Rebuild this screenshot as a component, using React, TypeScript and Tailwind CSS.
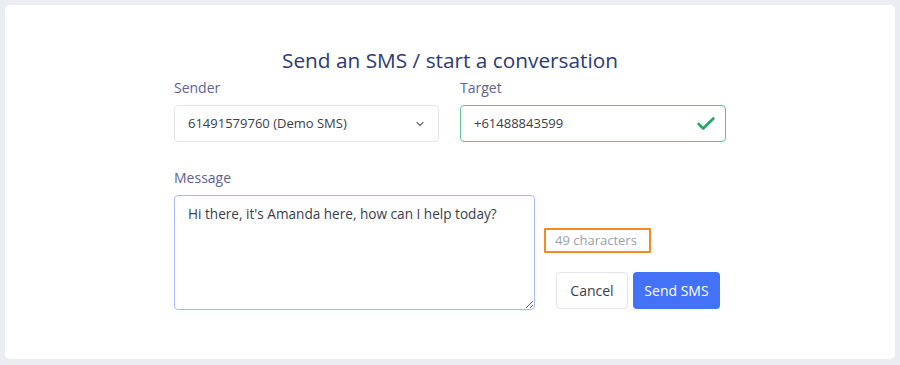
import { ChevronDown, Check } from 'lucide-react'

const font = { fontFamily: '"Open Sans", "Noto Sans", sans-serif' }

export default function App() {
  return (
    <div className="h-[365px] w-[900px] bg-[#ecedf3] p-[5px] pb-[6px]" style={font}>
      <div className="flex h-full flex-col items-center rounded-[5px] bg-white pt-[41px]">
        <h1 className="text-[20.8px] leading-[28px] text-[#2c3a72]">Send an SMS / start a conversation</h1>

        <div className="mt-[4px] grid w-[552px] grid-cols-[265px_266px] gap-x-[21px]">
          <div className="flex flex-col">
            <label className="text-[14px] leading-[20px] text-[#5d6393]">Sender</label>
            <div className="mt-[7px] flex h-[37px] items-center justify-between rounded-[4px] border border-[#e3e5ee] pl-[13px] pr-[12px] text-[13px] text-[#3a3d4a]">
              <span>61491579760 (Demo SMS)</span>
              <ChevronDown size={12} strokeWidth={2.5} className="text-[#6b6f80]" />
            </div>
          </div>
          <div className="flex flex-col">
            <label className="text-[14px] leading-[20px] text-[#5d6393]">Target</label>
            <div className="mt-[7px] flex h-[37px] items-center justify-between rounded-[4px] border border-[#5cc493] pl-[13px] pr-[8px] text-[13px] text-[#3a3d4a]">
              <span>+61488843599</span>
              <Check size={22} strokeWidth={3} className="text-[#23a86a]" />
            </div>
          </div>
        </div>

        <div className="mt-[26px] flex w-[552px] flex-col">
          <label className="text-[14px] leading-[20px] text-[#5d6393]">Message</label>
          <div className="mt-[7px] flex">
            <textarea
              className="h-[115px] w-[361px] resize rounded-[4px] border border-[#a9b8fb] px-[13px] py-[8px] text-[13.6px] leading-[20px] text-[#3a3d4a] outline-none"
              style={font}
              defaultValue="Hi there, it's Amanda here, how can I help today?"
            />
            <div className="ml-[9px] flex flex-col items-start">
              <div className="mt-[33px] flex h-[25px] w-[107px] items-center rounded-[1px] border-2 border-[#f58a1f] pl-[9px] text-[13px] text-[#9a9eab]">
                49 characters
              </div>
              <div className="ml-[12px] mt-[19px] flex gap-[5px]">
                <button className="h-[37px] w-[72px] rounded-[4px] border border-[#e3e5ee] bg-white text-[14px] text-[#3a3d4a]" style={font}>
                  Cancel
                </button>
                <button className="h-[37px] w-[87px] rounded-[4px] bg-[#4472f6] text-[14px] text-white" style={font}>
                  Send SMS
                </button>
              </div>
            </div>
          </div>
        </div>
      </div>
    </div>
  )
}
